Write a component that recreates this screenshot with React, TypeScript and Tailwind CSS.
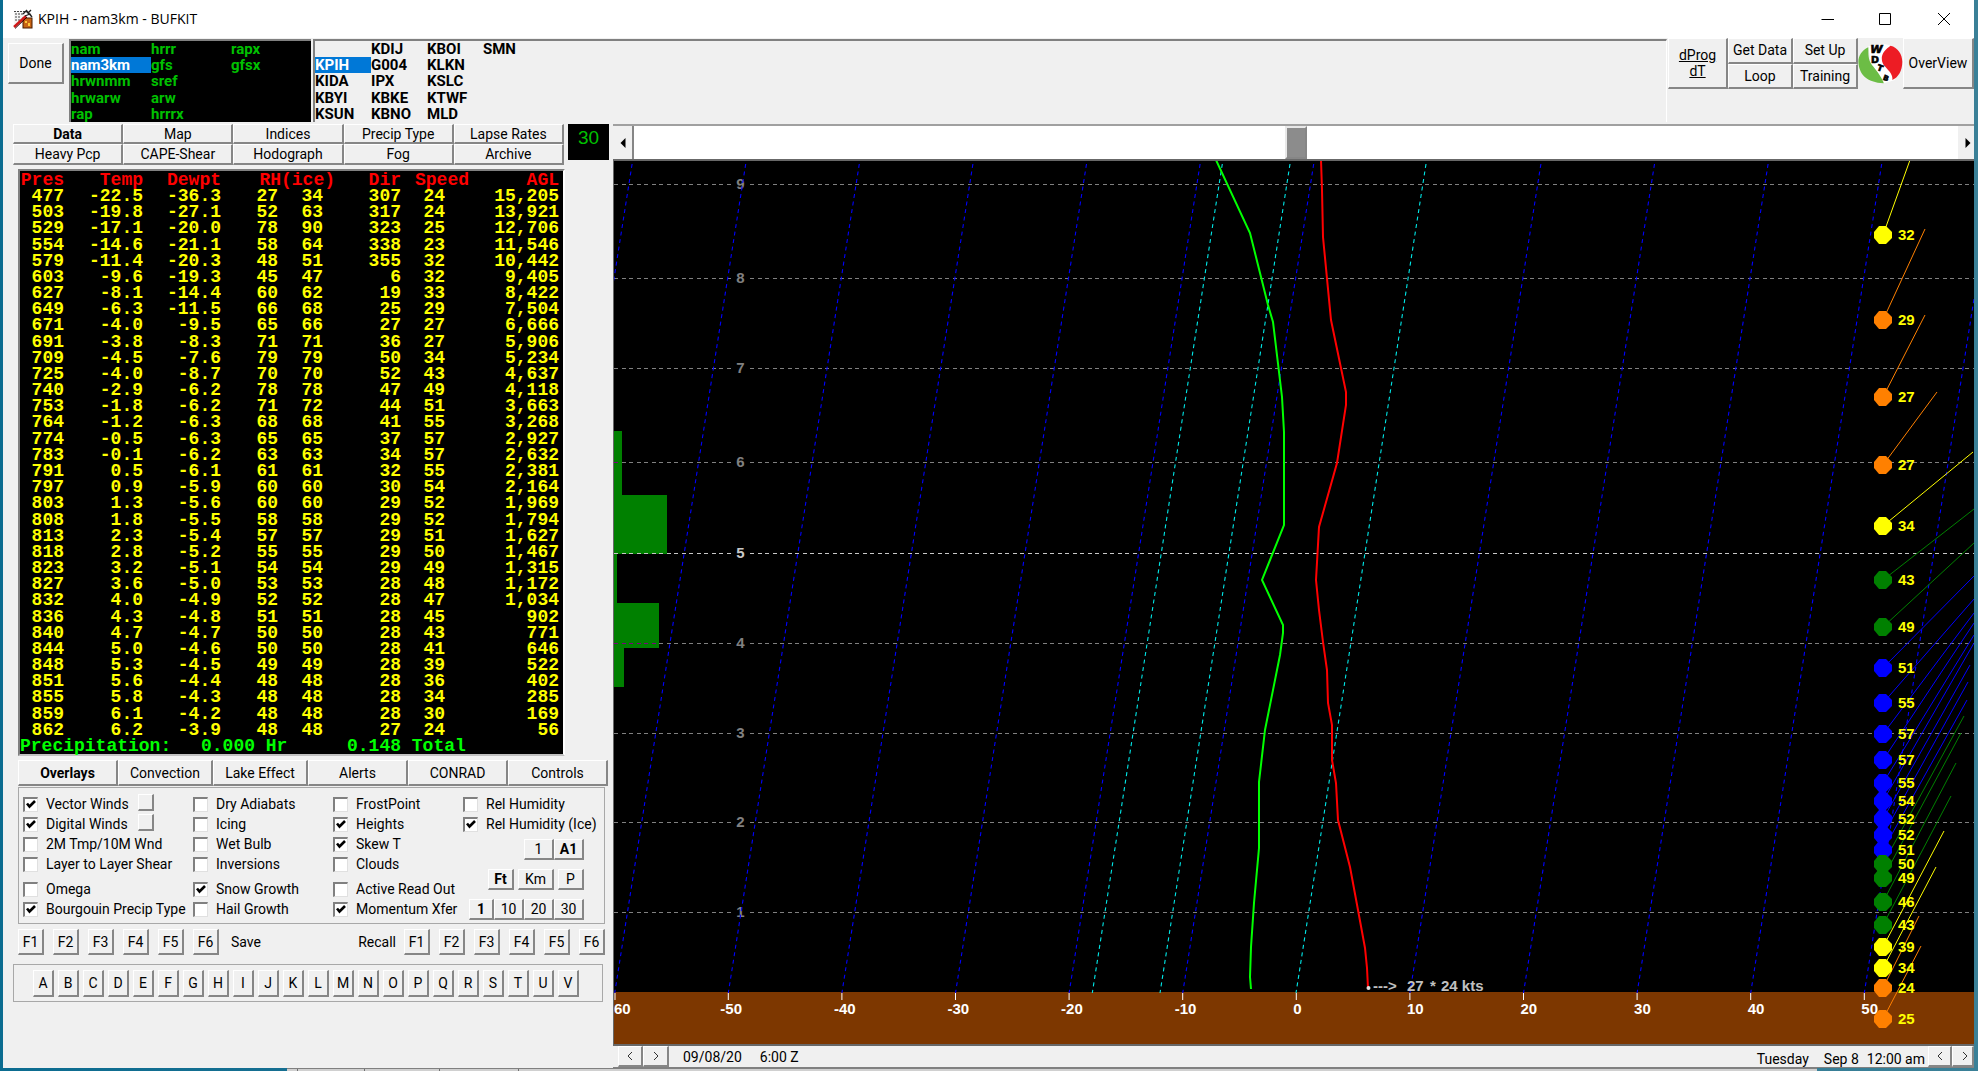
import React from "react";

const BEVEL =
  "border-t border-l border-r-2 border-b-2 border-t-white border-l-white border-r-[#868686] border-b-[#868686] bg-[#f0f0f0] flex items-center justify-center whitespace-nowrap";

function Btn({ children, className = "", label }: { children?: React.ReactNode; className?: string; label?: string }) {
  return (
    <button type="button" aria-label={label} className={`${BEVEL} ${className}`}>
      {children}
    </button>
  );
}

function Check({ label, on = false, className = "" }: { label: string; on?: boolean; className?: string }) {
  return (
    <label className={`flex h-5 items-center gap-2 whitespace-nowrap ${className}`}>
      <span className="relative flex h-[15px] w-[15px] shrink-0">
        <input
          type="checkbox"
          defaultChecked={on}
          className="peer h-[15px] w-[15px] appearance-none border-t-2 border-l-2 border-r border-b border-t-[#808080] border-l-[#808080] border-r-[#e0e0e0] border-b-[#e0e0e0] bg-white"
        />
        <svg viewBox="0 0 15 15" className="pointer-events-none absolute inset-0 hidden h-[15px] w-[15px] peer-checked:block">
          <path d="M4 6.5 L6.5 9.5 L12 4" fill="none" stroke="#000" strokeWidth="2.6" />
        </svg>
      </span>
      {label}
    </label>
  );
}

const MODELS = [
  ["nam", "nam3km", "hrwnmm", "hrwarw", "rap"],
  ["hrrr", "gfs", "sref", "arw", "hrrrx"],
  ["rapx", "gfsx"],
];
const STATIONS = [
  ["", "KPIH", "KIDA", "KBYI", "KSUN"],
  ["KDIJ", "G004", "IPX", "KBKE", "KBNO"],
  ["KBOI", "KLKN", "KSLC", "KTWF", "MLD"],
  ["SMN"],
];

const LEVELS = `477 -22.5 -36.3 27 34 307 24 15,205
503 -19.8 -27.1 52 63 317 24 13,921
529 -17.1 -20.0 78 90 323 25 12,706
554 -14.6 -21.1 58 64 338 23 11,546
579 -11.4 -20.3 48 51 355 32 10,442
603 -9.6 -19.3 45 47 6 32 9,405
627 -8.1 -14.4 60 62 19 33 8,422
649 -6.3 -11.5 66 68 25 29 7,504
671 -4.0 -9.5 65 66 27 27 6,666
691 -3.8 -8.3 71 71 36 27 5,906
709 -4.5 -7.6 79 79 50 34 5,234
725 -4.0 -8.7 70 70 52 43 4,637
740 -2.9 -6.2 78 78 47 49 4,118
753 -1.8 -6.2 71 72 44 51 3,663
764 -1.2 -6.3 68 68 41 55 3,268
774 -0.5 -6.3 65 65 37 57 2,927
783 -0.1 -6.2 63 63 34 57 2,632
791 0.5 -6.1 61 61 32 55 2,381
797 0.9 -5.9 60 60 30 54 2,164
803 1.3 -5.6 60 60 29 52 1,969
808 1.8 -5.5 58 58 29 52 1,794
813 2.3 -5.4 57 57 29 51 1,627
818 2.8 -5.2 55 55 29 50 1,467
823 3.2 -5.1 54 54 29 49 1,315
827 3.6 -5.0 53 53 28 48 1,172
832 4.0 -4.9 52 52 28 47 1,034
836 4.3 -4.8 51 51 28 45 902
840 4.7 -4.7 50 50 28 43 771
844 5.0 -4.6 50 50 28 41 646
848 5.3 -4.5 49 49 28 39 522
851 5.6 -4.4 48 48 28 36 402
855 5.8 -4.3 48 48 28 34 285
859 6.1 -4.2 48 48 28 30 169
862 6.2 -3.9 48 48 27 24 56`
  .split("\n")
  .map((line) => line.split(" "));

const Y = "#ffff00";
const O = "#ff8000";
const G = "#008000";
const B = "#0000ff";
// [level y, speed, colour, barb end x, barb end y]
const WINDS: [number, number, string, number, number][] = [
  [235, 32, Y, 1910, 160],
  [320, 29, O, 1925, 229],
  [397, 27, O, 1925, 315],
  [465, 27, O, 1937, 392],
  [526, 34, Y, 1973, 452],
  [580, 43, G, 1974, 509],
  [627, 49, G, 1974, 543],
  [668, 51, B, 1974, 576],
  [703, 55, B, 1974, 599],
  [734, 57, B, 1974, 613],
  [760, 57, B, 1974, 623],
  [783, 55, B, 1974, 635],
  [801, 54, B, 1974, 643],
  [819, 52, B, 1970, 665],
  [835, 52, B, 1968, 682],
  [850, 51, B, 1967, 700],
  [864, 50, G, 1964, 716],
  [878, 49, G, 1961, 733],
  [902, 46, G, 1956, 763],
  [925, 43, G, 1951, 796],
  [947, 39, Y, 1944, 831],
  [968, 34, Y, 1936, 867],
  [988, 24, O, 1919, 916],
  [1019, 25, O, 1921, 946],
];
const HEIGHTS: [number, number][] = [
  [9, 184.5], [8, 278.5], [7, 368.5], [6, 462.5], [5, 553.5], [4, 643.5], [3, 733.5], [2, 822.5], [1, 912.5],
];
const TEMPS = [-50, -40, -30, -20, -10, 0, 10, 20, 30, 40, 50];
const tempX = (t: number) => 1296.3 + t * 11.36;
const BLUE = [-70, -60, -50, -40, -30, -20, -10, 10, 20, 30, 40, 50];

function Sounding() {
  return (
    <svg
      viewBox="614 161 1360 884"
      preserveAspectRatio="xMinYMin slice"
      className="block h-full w-full bg-black"
      fontFamily="'Liberation Sans', sans-serif"
      fontWeight="bold"
      fontSize="15"
    >
      <rect x="614" y="992" width="1360" height="60" fill="#7d3700" />
      <path d="M614 431H622V495H667V554H617V603H659V648H624V687H614Z" fill="#008000" />
      {HEIGHTS.map(([n, y]) => (
        <g key={n} stroke={n === 5 ? "#c8c8c8" : "#808080"} strokeDasharray="4 3.5" shapeRendering="crispEdges">
          <line x1="614" x2="731" y1={y} y2={y} />
          <line x1="750" x2="1974" y1={y} y2={y} />
        </g>
      ))}
      <g stroke="#800080" strokeDasharray="4 3.5" shapeRendering="crispEdges">
        <line x1="614" x2="622" y1="462.5" y2="462.5" />
        <line x1="614" x2="659" y1="643.5" y2="643.5" />
      </g>
      {HEIGHTS.map(([n, y]) => (
        <text key={n} x="740.5" y={y + 4.5} textAnchor="middle" fill={n === 5 ? "#c8c8c8" : "#808080"}>
          {n}
        </text>
      ))}
      {BLUE.map((t) => (
        <line key={t} x1={tempX(t) + 131} y1="164" x2={tempX(t)} y2="993" stroke="#0000ff" strokeWidth="1.1" strokeDasharray="4 3.6" />
      ))}
      {[1092.3, 1160, 1296].map((x) => (
        <line key={x} x1={x + 130} y1="164" x2={x} y2="993" stroke="#00e8e8" strokeWidth="1.1" strokeDasharray="4 3.6" />
      ))}
      <line x1="615" x2="615" y1="993" y2="1000" stroke="#fff" />
      <text x="614" y="1014" fill="#fff">
        60
      </text>
      {TEMPS.map((t) => (
        <g key={t}>
          <line x1={tempX(t)} x2={tempX(t)} y1="993" y2="1000" stroke="#fff" />
          <text x={tempX(t) + (t < 0 ? -8 : -3)} y="1014" fill="#fff">
            {t}
          </text>
        </g>
      ))}
      <polyline
        fill="none"
        stroke="#00ff00"
        strokeWidth="2"
        points="1216,160 1250,233 1268,305 1273,322 1282,397 1284,432 1284,525 1262,580 1283,625 1283,633 1280,655 1265,730 1259,782 1259,848 1254,903 1251,947 1250,977 1251,989"
      />
      <polyline
        fill="none"
        stroke="#ff0000"
        strokeWidth="2"
        points="1321,160 1322,190 1323,237 1331,320 1346,392 1346,405 1337,463 1319,527 1316,580 1319,610 1323,642 1327,670 1328,703 1332,725 1332,760 1336,783 1338,820 1350,867 1358,910 1365,948 1367,968 1368,988"
      />
      <circle cx="1368.5" cy="988" r="2" fill="#e0e0e0" />
      <g fill="#c0c0c0">
        <text x="1373" y="991">---&gt;</text>
        <text x="1407" y="991">27</text>
        <text x="1430" y="991">*</text>
        <text x="1441" y="991">24 kts</text>
      </g>
      {WINDS.map(([y, , c, x2, y2], i) => (
        <line key={i} x1="1883" y1={y} x2={x2} y2={y2} stroke={c} strokeWidth="1" />
      ))}
      {WINDS.map(([y, , c], i) => (
        <path key={i} d={`M1879 ${y - 9}h7l6 6v6l-6 6h-7l-5-6v-6z`} fill={c} />
      ))}
      {WINDS.map(([y, s], i) => (
        <text key={i} x="1898" y={y + 5} fill={Y}>
          {s}
        </text>
      ))}
    </svg>
  );
}

function TitleIcon() {
  return (
    <svg viewBox="0 0 20 20" className="h-5 w-5">
      <rect x="1" y="2" width="11" height="13" fill="#f4f4f4" />
      <path d="M1 2.5h11M2 5h8M2 8h6M2 11h5" stroke="#444" strokeWidth="1" strokeDasharray="2 1" />
      <rect x="10" y="9" width="9" height="10" fill="#c86414" stroke="#4a1c00" />
      <path d="M12 12h2v2h-2zM15 14h2v3h-2z" fill="#ffc83c" />
      <path d="M1 18 L13 7" stroke="#d01818" strokeWidth="2.4" />
      <path d="M2 19.5 L14 8" stroke="#300" strokeWidth="1" />
      <path d="M10 5l3-3 2 2 3-3M13 1l6 7M12 7l5-2 2 3" stroke="#222" strokeWidth="1.3" fill="none" />
    </svg>
  );
}

function WdtbLogo() {
  return (
    <svg viewBox="775 130 134 124" className="h-[41px] w-[45px]" fontFamily="'DejaVu Sans', sans-serif" fontWeight="bold">
      <path d="M805 140L852 132L874 138L860 160L858 190L886 242L852 252L815 200Z" fill="#fff" />
      <path d="M805 143C785 152 775 170 775 187C777 225 800 250 852 252C850 240 832 215 815 195C804 178 806 165 805 143Z" fill="#6cbd45" />
      <path d="M872 138C895 143 908 165 908 187C908 215 895 235 878 242C880 225 868 215 858 203C845 190 846 180 846 172C850 155 860 148 872 138Z" fill="#ed1c24" />
      <g fill="#000" stroke="#000" strokeWidth="2">
        <text x="811" y="160" fontSize="34" fontStyle="italic">W</text>
        <text x="813" y="190" fontSize="29">D</text>
        <text x="832" y="215" fontSize="25" transform="rotate(20 843 207)">T</text>
        <text x="850" y="244" fontSize="22" transform="rotate(20 860 236)">B</text>
      </g>
    </svg>
  );
}

function FKeys() {
  return (
    <div className="flex gap-[9px]">
      {["F1", "F2", "F3", "F4", "F5", "F6"].map((k) => (
        <Btn key={k} className="h-[26px] w-[26px]">
          {k}
        </Btn>
      ))}
    </div>
  );
}

function Chevron({ d }: { d: string }) {
  return (
    <svg viewBox="0 0 8 10" className="h-2.5 w-2" fill="none" stroke="#333">
      <path d={d} />
    </svg>
  );
}
const PREV = "M6 1L2 5l4 4";
const NEXT = "M2 1l4 4-4 4";

export default function App() {
  return (
    <div className="flex h-screen w-full flex-col overflow-hidden bg-linear-to-r from-[#0b6c90] to-[#3a8097] font-['Roboto','Liberation_Sans',sans-serif] text-[14px] leading-4 text-black">
      <div className="mr-1 ml-[3px] flex min-h-0 flex-1 flex-col bg-[#f0f0f0]">
        <header className="flex h-[38px] shrink-0 items-center bg-white pl-2.5">
          <TitleIcon />
          <h1 className="ml-[5px] flex-1 font-['Open_Sans',sans-serif] text-[14px]">KPIH - nam3km - BUFKIT</h1>
          <div className="flex gap-[34px] pr-[18px]">
            {["M5.5 12.5H18", "M5.5 6.5h11v11h-11z", "M6 6l12 12M18 6L6 18"].map((d, i) => (
              <button key={i} type="button" aria-label={["Minimize", "Maximize", "Close"][i]} className="flex w-6">
                <svg viewBox="0 0 24 24" className="h-6 w-6" fill="none" stroke="#000" strokeWidth="1">
                  <path d={d} />
                </svg>
              </button>
            ))}
          </div>
        </header>

        <div className="flex h-[84px] shrink-0 pl-[5px]">
          <Btn className="mt-[5px] h-[41px] w-14">Done</Btn>
          <div className="mt-px ml-[5px] grid w-[242px] grid-cols-3 border-t-2 border-l-2 border-t-[#808080] border-l-[#808080] bg-black text-[15px] font-bold text-[#00c000]">
            {MODELS.map((col, i) => (
              <ul key={i} className="grid grid-rows-5">
                {col.map((m) => (
                  <li key={m} className={m === "nam3km" ? "bg-[#0078d7] text-white" : ""}>
                    {m}
                  </li>
                ))}
              </ul>
            ))}
          </div>
          <div className="mt-px ml-0.5 flex flex-1 border-t-2 border-r border-l-2 border-t-[#808080] border-l-[#808080] border-r-white text-[15px] font-bold">
            {STATIONS.map((col, i) => (
              <ul key={i} className="grid w-14 grid-rows-5">
                {col.map((m, j) => (
                  <li key={j} className={m === "KPIH" ? "bg-[#0078d7] text-white" : ""}>
                    {m}
                  </li>
                ))}
              </ul>
            ))}
          </div>
          <div className="ml-px flex h-[51px]">
            <Btn className="w-[60px] underline">
              <span>
                dProg
                <br />
                dT
              </span>
            </Btn>
            <div className="grid w-[130px] grid-cols-2 grid-rows-2">
              <Btn>Get Data</Btn>
              <Btn>Set Up</Btn>
              <Btn>Loop</Btn>
              <Btn>Training</Btn>
            </div>
            <div className="flex w-[45px] items-center">
              <WdtbLogo />
            </div>
            <Btn className="w-[71px]">OverView</Btn>
          </div>
        </div>

        <main className="flex min-h-0 flex-1">
          <section className="flex w-[610px] shrink-0 flex-col pt-0.5">
            <div className="flex gap-1 pl-2.5">
              <div className="grid w-[551px] grid-cols-5">
                {["Data", "Map", "Indices", "Precip Type", "Lapse Rates", "Heavy Pcp", "CAPE-Shear", "Hodograph", "Fog", "Archive"].map((t, i) => (
                  <Btn key={t} className={i === 0 ? "h-5 font-bold" : i < 5 ? "h-5" : "h-[21px]"}>
                    {t}
                  </Btn>
                ))}
              </div>
              <div className="h-9 w-[41px] bg-black pt-1 text-center font-['Liberation_Sans',sans-serif] text-[19px] leading-5 text-[#00c000]">30</div>
            </div>

            <div className="mt-1 ml-[15px] h-[587px] w-[547px] border-2 border-t-[#808080] border-r-white border-b-[#c0c0c0] border-l-[#808080] bg-black pt-px">
              <table className="h-full w-full table-fixed border-collapse font-['Liberation_Mono',monospace] text-[18px] leading-4 font-bold text-[#ffff00]">
                <colgroup>
                  <col className="w-11" />
                  <col className="w-[79px]" />
                  <col className="w-[78px]" />
                  <col className="w-[57px]" />
                  <col className="w-[57px]" />
                  <col className="w-[66px]" />
                  <col className="w-[68px]" />
                  <col />
                </colgroup>
                <thead>
                  <tr className="text-[#ff0000]">
                    <th className="p-0 text-right">Pres</th>
                    <th className="p-0 text-right">Temp</th>
                    <th className="p-0 text-right">Dewpt</th>
                    <th className="p-0 text-right" colSpan={2}>RH(ice)</th>
                    <th className="p-0 text-right">Dir</th>
                    <th className="p-0 text-right">Speed</th>
                    <th className="p-0 pr-1 text-right">AGL</th>
                  </tr>
                </thead>
                <tbody>
                  {LEVELS.map((row) => (
                    <tr key={row[0]} className="text-right">
                      {row.map((v, i) => (
                        <td key={i} className={i === 4 ? "p-0 pr-3" : i === 6 ? "p-0 pr-6" : i === 7 ? "p-0 pr-1" : "p-0"}>
                          {v}
                        </td>
                      ))}
                    </tr>
                  ))}
                </tbody>
                <tfoot>
                  <tr className="text-[#00ff00]">
                    <td colSpan={8} className="p-0">
                      <div className="flex">
                        <span className="w-[181px]">Precipitation:</span>
                        <span className="w-[146px]">0.000 Hr</span>
                        <span>0.148 Total</span>
                      </div>
                    </td>
                  </tr>
                </tfoot>
              </table>
            </div>

            <div className="mt-1 ml-[15px] flex h-[26px] w-[590px]">
              <Btn className="w-[100px] font-bold">Overlays</Btn>
              <Btn className="w-[95px]">Convection</Btn>
              <Btn className="w-[95px]">Lake Effect</Btn>
              <Btn className="w-[100px]">Alerts</Btn>
              <Btn className="w-[100px]">CONRAD</Btn>
              <Btn className="w-[100px]">Controls</Btn>
            </div>

            <div className="mt-px ml-[15px] flex h-[137px] w-[587px] border border-[#a8a8a8] pt-1.5 pl-1">
              <div className="w-[170px]">
                <div className="flex">
                  <Check label="Vector Winds" on className="w-[115px]" />
                  <Btn label="Vector Winds options" className="h-[17px] w-4" />
                </div>
                <div className="flex">
                  <Check label="Digital Winds" on className="w-[115px]" />
                  <Btn label="Digital Winds options" className="h-[17px] w-4" />
                </div>
                <Check label="2M Tmp/10M Wnd" />
                <Check label="Layer to Layer Shear" />
                <Check label="Omega" className="mt-[5px]" />
                <Check label="Bourgouin Precip Type" on />
              </div>
              <div className="w-[140px]">
                <Check label="Dry Adiabats" />
                <Check label="Icing" />
                <Check label="Wet Bulb" />
                <Check label="Inversions" />
                <Check label="Snow Growth" on className="mt-[5px]" />
                <Check label="Hail Growth" />
              </div>
              <div className="w-[130px]">
                <Check label="FrostPoint" />
                <Check label="Heights" on />
                <Check label="Skew T" on />
                <Check label="Clouds" />
                <Check label="Active Read Out" className="mt-[5px]" />
                <Check label="Momentum Xfer" on />
              </div>
              <div className="w-[121px]">
                <Check label="Rel Humidity" />
                <Check label="Rel Humidity (Ice)" on />
                <div className="mt-[5px] flex justify-end">
                  <Btn className="h-[21px] w-[30px]">1</Btn>
                  <Btn className="h-[21px] w-[30px] font-bold">A1</Btn>
                </div>
                <div className="mt-[9px] flex justify-end gap-1">
                  <Btn className="h-[21px] w-[26px] font-bold">Ft</Btn>
                  <Btn className="h-[21px] w-9">Km</Btn>
                  <Btn className="h-[21px] w-[26px]">P</Btn>
                </div>
                <div className="mt-[9px] flex justify-end">
                  <Btn className="h-[21px] w-[25px] font-bold">1</Btn>
                  <Btn className="h-[21px] w-[30px]">10</Btn>
                  <Btn className="h-[21px] w-[30px]">20</Btn>
                  <Btn className="h-[21px] w-[30px]">30</Btn>
                </div>
              </div>
            </div>

            <div className="mt-[5px] ml-[15px] flex w-[587px] items-center">
              <FKeys />
              <span className="ml-3">Save</span>
              <span className="mr-2 ml-auto">Recall</span>
              <FKeys />
            </div>

            <div className="mt-[9px] ml-2.5 flex h-[38px] w-[590px] items-center gap-1 border border-[#a8a8a8] pl-[19px]">
              {"ABCDEFGHIJKLMNOPQRSTUV".split("").map((c) => (
                <Btn key={c} className="h-[27px] w-[21px]">
                  {c}
                </Btn>
              ))}
            </div>
          </section>

          <section className="flex min-w-0 flex-1 flex-col pt-0.5">
            <div className="flex h-[35px] shrink-0 border-t-2 border-[#a0a0a0]">
              <button type="button" aria-label="Scroll left" className="flex w-[21px] items-center justify-center border-r-2 border-[#868686]">
                <svg viewBox="0 0 6 8" className="h-2.5 w-2"><path d="M5 0v8L1 4z" /></svg>
              </button>
              <input
                type="range"
                aria-label="Forecast hour"
                defaultValue={50}
                className="m-0 h-full min-w-0 flex-1 appearance-none bg-white [&::-webkit-slider-thumb]:h-[33px] [&::-webkit-slider-thumb]:w-[22px] [&::-webkit-slider-thumb]:appearance-none [&::-webkit-slider-thumb]:border-2 [&::-webkit-slider-thumb]:border-t-[#e8e8e8] [&::-webkit-slider-thumb]:border-r-[#868686] [&::-webkit-slider-thumb]:border-b-[#868686] [&::-webkit-slider-thumb]:border-l-[#e8e8e8] [&::-webkit-slider-thumb]:bg-[#8c8c8c]"
              />
              <button type="button" aria-label="Scroll right" className="flex w-4 items-center justify-end pr-0.5">
                <svg viewBox="0 0 6 8" className="h-2.5 w-2"><path d="M1 0v8l4-4z" /></svg>
              </button>
            </div>
            <div className="min-h-0 flex-1 border-t-2 border-b-2 border-l border-[#686868]">
              <Sounding />
            </div>
            <footer className="flex h-[22px] shrink-0 items-center border-b border-b-[#808080] pl-[5px]">
              <Btn label="Previous" className="h-[21px] w-[25px]">
                <Chevron d={PREV} />
              </Btn>
              <Btn label="Next" className="h-[21px] w-[26px]">
                <Chevron d={NEXT} />
              </Btn>
              <span className="ml-3.5">09/08/20</span>
              <span className="ml-[18px]">6:00 Z</span>
              <div className="ml-auto flex items-end">
                <span className="mr-[15px]">Tuesday</span>
                <span className="mr-2">Sep 8</span>
                <span className="mr-[3px]">12:00 am</span>
                <Btn label="Previous run" className="h-[21px] w-6">
                  <Chevron d={PREV} />
                </Btn>
                <Btn label="Next run" className="h-[21px] w-[22px] pl-1">
                  <Chevron d={NEXT} />
                </Btn>
              </div>
            </footer>
          </section>
        </main>
      </div>
      <div className="mr-[161px] ml-[287px] flex h-[3px] shrink-0 border-t border-[#808080] bg-[#d0d0d0]">
        <span className="ml-2.5 w-[67px] border-l border-[#707070]" />
        <span className="w-[75px] border-l border-[#707070]" />
        <span className="w-[79px] border-l border-[#707070]" />
        <span className="w-px border-l border-[#707070]" />
      </div>
    </div>
  );
}
